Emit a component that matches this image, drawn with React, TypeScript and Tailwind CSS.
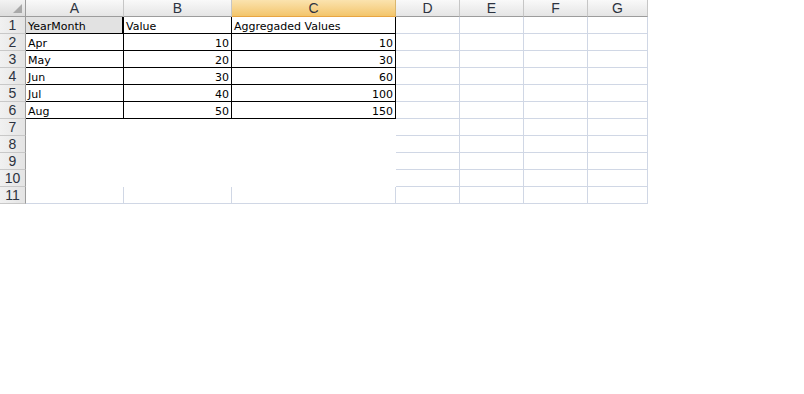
const cols = [
  { key: 'A', w: 'w-[98px]' },
  { key: 'B', w: 'w-[108px]' },
  { key: 'C', w: 'w-[164px]' },
  { key: 'D', w: 'w-[64px]' },
  { key: 'E', w: 'w-[64px]' },
  { key: 'F', w: 'w-[64px]' },
  { key: 'G', w: 'w-[60px]' },
]

const data: [string, string, string][] = [
  ['YearMonth', 'Value', 'Aggregaded Values'],
  ['Apr', '10', '10'],
  ['May', '20', '30'],
  ['Jun', '30', '60'],
  ['Jul', '40', '100'],
  ['Aug', '50', '150'],
]

const grid = 'border-r border-b border-[#d0d7e5]'
const black = 'border-r border-b border-black'

function RowHead({ n }: { n: number }) {
  return (
    <div className="w-[26px] h-[17px] shrink-0 box-border border-r border-b border-r-[#9c9c9c] border-b-[#c8c8c8] bg-gradient-to-r from-[#f1f1f1] to-[#e4e4e4] flex items-center justify-center text-[14px] leading-none text-[#2d3340] font-['Liberation_Sans',sans-serif]">
      {n}
    </div>
  )
}

function Cell({ w, cls, right, children }: { w: string; cls: string; right?: boolean; children?: React.ReactNode }) {
  return (
    <div
      className={`${w} h-[17px] shrink-0 box-border ${cls} flex items-end pb-[1px] px-[2px] text-[11px] leading-none text-black font-['DejaVu_Sans',sans-serif] ${
        right ? 'justify-end' : 'justify-start'
      }`}
    >
      {children}
    </div>
  )
}

function cellClass(row: number, col: number) {
  if (row <= 6 && col <= 2) {
    if (row === 1 && col === 0) return 'border-r-2 border-b border-black bg-[#e2e2e2]'
    return black
  }
  if (col <= 2 && row >= 7 && row <= 10) return 'bg-white'
  if (col <= 2 && row === 11) return grid
  return grid
}

export default function App() {
  return (
    <div className="w-[804px] h-[394px] bg-white overflow-hidden select-none">
      {/* header row */}
      <div className="flex h-[17px]">
        <div className="w-[26px] h-[17px] shrink-0 box-border border-r border-b border-[#9c9c9c] bg-gradient-to-b from-[#f3f3f3] to-[#dcdcdc] relative">
          <svg className="absolute right-[3px] bottom-[3px]" width="9" height="9" viewBox="0 0 9 9">
            <path d="M9 0 L9 9 L0 9 Z" fill="#a9a9a9" />
          </svg>
        </div>
        {cols.map(({ key, w }) => (
          <div
            key={key}
            className={`${w} h-[17px] shrink-0 box-border border-r border-b flex items-center justify-center text-[14px] leading-none font-['Liberation_Sans',sans-serif] ${
              key === 'C'
                ? 'bg-gradient-to-b from-[#fbe3ae] to-[#f3c56a] border-r-[#d9b66e] border-b-[#e8a542] text-[#2d3340]'
                : 'bg-gradient-to-b from-[#f9f9f9] to-[#e5e5e5] border-r-[#c6c6c6] border-b-[#9c9c9c] text-[#2d3340]'
            }`}
          >
            {key}
          </div>
        ))}
      </div>

      {Array.from({ length: 11 }, (_, i) => i + 1).map((row) => (
        <div key={row} className="flex h-[17px]">
          <RowHead n={row} />
          {cols.map(({ key, w }, ci) => {
            const value = row <= 6 && ci <= 2 ? data[row - 1][ci] : ''
            const right = row >= 2 && ci >= 1
            return (
              <Cell key={key} w={w} cls={cellClass(row, ci)} right={right}>
                {value}
              </Cell>
            )
          })}
        </div>
      ))}
    </div>
  )
}
